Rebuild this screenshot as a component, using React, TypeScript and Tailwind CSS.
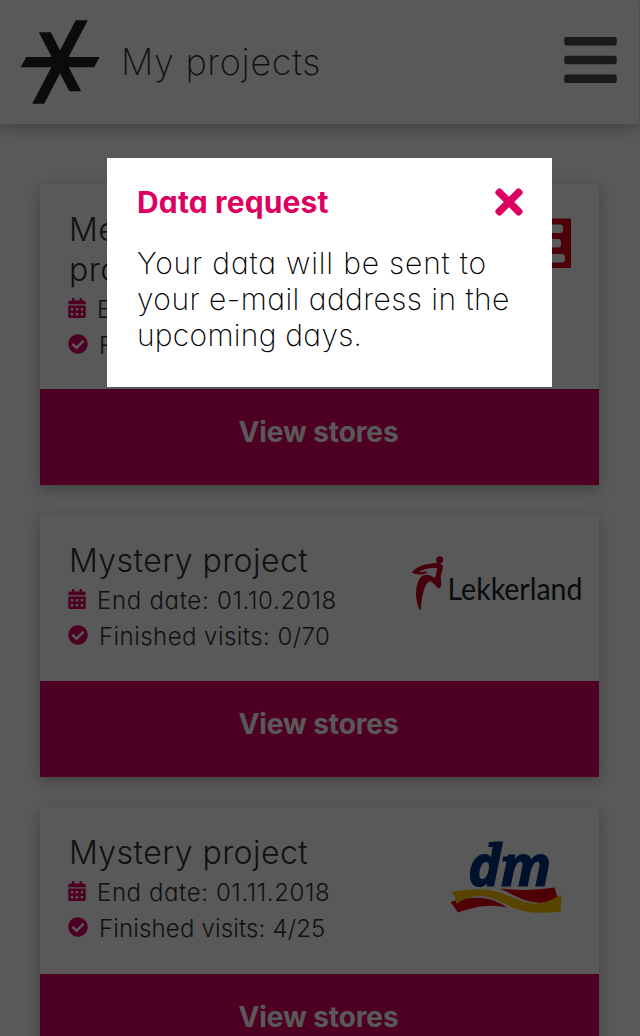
import type { ReactNode } from 'react'
import { FaBars, FaCalendarAlt, FaCheckCircle, FaTimes } from 'react-icons/fa'

type Project = {
  id: number
  title: ReactNode
  endDate: string
  endTracking: string
  visits: string
  visitsTracking: string
  bodyHeight: string
  logo: ReactNode
}

function BrandMark() {
  return (
    <svg className="h-[84px] w-[80px] shrink-0" viewBox="20 20 80 84" fill="#222">
      <path d="M75.7 20.3H87.8L44.2 103.7H32.2Z" />
      <path d="M38.8 32.3H50.8L81.2 91.2H69.3Z" />
      <path d="M26.3 57H99.7L94.2 67.2H20.6Z" />
    </svg>
  )
}

function ReweLogo() {
  return (
    <svg className="mt-[33px] mr-[28.5px] h-[51px] w-[160px]" viewBox="0 0 160 51">
      <path fill="#dc0014" d="M0 1.500H160V51H0Z" />
      <g fill="#fff">
        <rect x="128" y="7.500" width="24" height="8.500" rx="3" />
        <rect x="128" y="22" width="22" height="8.500" rx="3" />
        <rect x="128" y="37" width="26" height="8.500" rx="3" />
      </g>
    </svg>
  )
}

function LekkerlandLogo() {
  return (
    <svg className="mt-[38px] mr-[15px] h-[60px] w-[176px]" viewBox="408 553 176 60">
      <g fill="#c8001e" transform="translate(390 540) scale(0.33333)">
        <circle cx="149" cy="59" r="10.500" />
        <path d="M65 97C78 84 92 76 110 73C124 70 138 67 149 70C158 73 160 79 158 87L152 108L154 132C153 142 149 146 144 145C137 136 130 128 120 123C111 128 105 138 101 152C96 170 94 188 92 209H88C80 188 76 169 79 147C82 127 89 111 101 106C112 102 124 106 134 115L138 103L142 85C125 82 104 86 88 95C94 97 102 95 111 93L110 99C96 105 79 106 65 97Z" />
      </g>
      <text
        x="447.500"
        y="600"
        fontFamily="Lato, sans-serif"
        fontSize="30"
        fill="#17252e"
        textLength="135"
        lengthAdjust="spacingAndGlyphs"
      >
        Lekkerland
      </text>
    </svg>
  )
}

function DmLogo() {
  return (
    <svg className="mt-[32px] mr-[34px] h-[76px] w-[116px] overflow-visible" viewBox="450 839 116 76">
      <g fill="#00327d" stroke="#00327d" strokeWidth="1.200">
        <text
          x="469"
          y="885.500"
          fontFamily="'Noto Sans', sans-serif"
          fontSize="57"
          fontWeight="700"
          fontStyle="italic"
          textLength="83"
          lengthAdjust="spacingAndGlyphs"
        >
          dm
        </text>
        <path d="M490.500 842.500H499V846.500H490Z M504.500 857H511V861H504Z" />
      </g>
      <path
        fill="#e3000f"
        d="M501 888.500C520 891 538 890 555.500 887.500L558.500 897C552 903 541 904 529 901C518 898 510 892 501 888.500Z"
      />
      <path
        fill="#e3000f"
        d="M451.500 902C465 898 480 896 491 899.500C498 901.500 503 904 508 907.500C490 903.500 475 907 459 912.500Z"
      />
      <path
        fill="#fdc300"
        d="M452 892C464 890 473 889 484 889.500C504 890 517 902 535 903.500C546 904 553 899.500 561.500 895L562.500 898L561.500 911.500C549 913 535 914 521 910C503 904 492 894 475 896.500C468 898 463 900 457.500 904L456 897Z"
      />
    </svg>
  )
}

const projects: Project[] = [
  {
    id: 1,
    title: (
      <>
        Merchandising
        <br />
        project
      </>
    ),
    endDate: '01.10.2018',
    endTracking: 'tracking-[0.7px]',
    visits: '0/70',
    visitsTracking: 'tracking-[0.45px]',
    bodyHeight: 'h-[205px]',
    logo: <ReweLogo />,
  },
  {
    id: 2,
    title: 'Mystery project',
    endDate: '01.10.2018',
    endTracking: 'tracking-[0.7px]',
    visits: '0/70',
    visitsTracking: 'tracking-[0.45px]',
    bodyHeight: 'h-[166px]',
    logo: <LekkerlandLogo />,
  },
  {
    id: 3,
    title: 'Mystery project',
    endDate: '01.11.2018',
    endTracking: 'tracking-[0.6px]',
    visits: '4/25',
    visitsTracking: 'tracking-[0.15px]',
    bodyHeight: 'h-[167px]',
    logo: <DmLogo />,
  },
]

function ProjectCard({ project }: { project: Project }) {
  return (
    <article className="bg-white shadow-[0_4px_14px_rgba(0,0,0,0.28)]">
      <div className={`flex justify-between overflow-hidden ${project.bodyHeight}`}>
        <div className="shrink-0 pt-[26px] pl-7 whitespace-nowrap text-[#333]">
          <h2 className="pl-px text-[32px] leading-10 font-[260] tracking-[0.45px]">{project.title}</h2>
          <p className="flex h-9 items-center text-2xl font-[270]">
            <FaCalendarAlt className="mr-[11px] h-5 w-[18px] text-[#dc0061]" />
            <span className={`pt-[3px] ${project.endTracking}`}>End date: {project.endDate}</span>
          </p>
          <p className="flex h-9 items-center text-2xl font-[270]">
            <FaCheckCircle className="mr-[11px] size-5 text-[#dc0061]" />
            <span className={`pt-[3px] ${project.visitsTracking}`}>Finished visits: {project.visits}</span>
          </p>
        </div>
        {project.logo}
      </div>
      <button className="flex h-24 w-full items-center justify-center bg-[#dc0061] pr-[2px] pb-[10px] text-[28px] font-bold tracking-[-0.1px] text-white">
        View stores
      </button>
    </article>
  )
}

function DataRequestDialog() {
  return (
    <div className="fixed inset-0 z-20 bg-black/65">
      <div
        role="dialog"
        className="mt-[158px] ml-[107px] h-[229px] w-[445px] bg-white pt-[22px] pr-[29px] pl-[30px]"
      >
        <div className="flex h-[45px] items-center justify-between text-[#dc0061]">
          <h2 className="text-[30px] leading-[45px] font-bold tracking-[0.15px]">Data request</h2>
          <FaTimes className="mb-[2px] h-10 w-[28px]" />
        </div>
        <p className="mt-5 text-[30px] leading-9 font-[250] whitespace-nowrap text-black">
          <span className="tracking-[0.83px]">Your data will be sent to</span>
          <br />
          <span className="tracking-[0.46px]">your e-mail address in the</span>
          <br />
          <span className="tracking-[0.27px]">upcoming days.</span>
        </p>
      </div>
    </div>
  )
}

export default function App() {
  return (
    <div className="h-[1036px] overflow-hidden bg-white font-[Inter,sans-serif] [font-feature-settings:'cv11']">
      <div className="w-[639px]">
        <header className="relative z-10 flex h-[124px] items-center bg-white pr-[22px] pl-5 shadow-[0_4px_14px_rgba(0,0,0,0.28)]">
          <BrandMark />
          <h1 className="ml-[21px] flex-1 text-4xl font-[250] tracking-[0.7px] text-[#333]">My projects</h1>
          <FaBars className="mb-[5px] h-[60px] w-[53px] text-[#4a4a4a]" />
        </header>
        <main className="flex flex-col gap-[30px] px-10 pt-[60px]">
          {projects.map((project) => (
            <ProjectCard key={project.id} project={project} />
          ))}
        </main>
      </div>
      <DataRequestDialog />
    </div>
  )
}
